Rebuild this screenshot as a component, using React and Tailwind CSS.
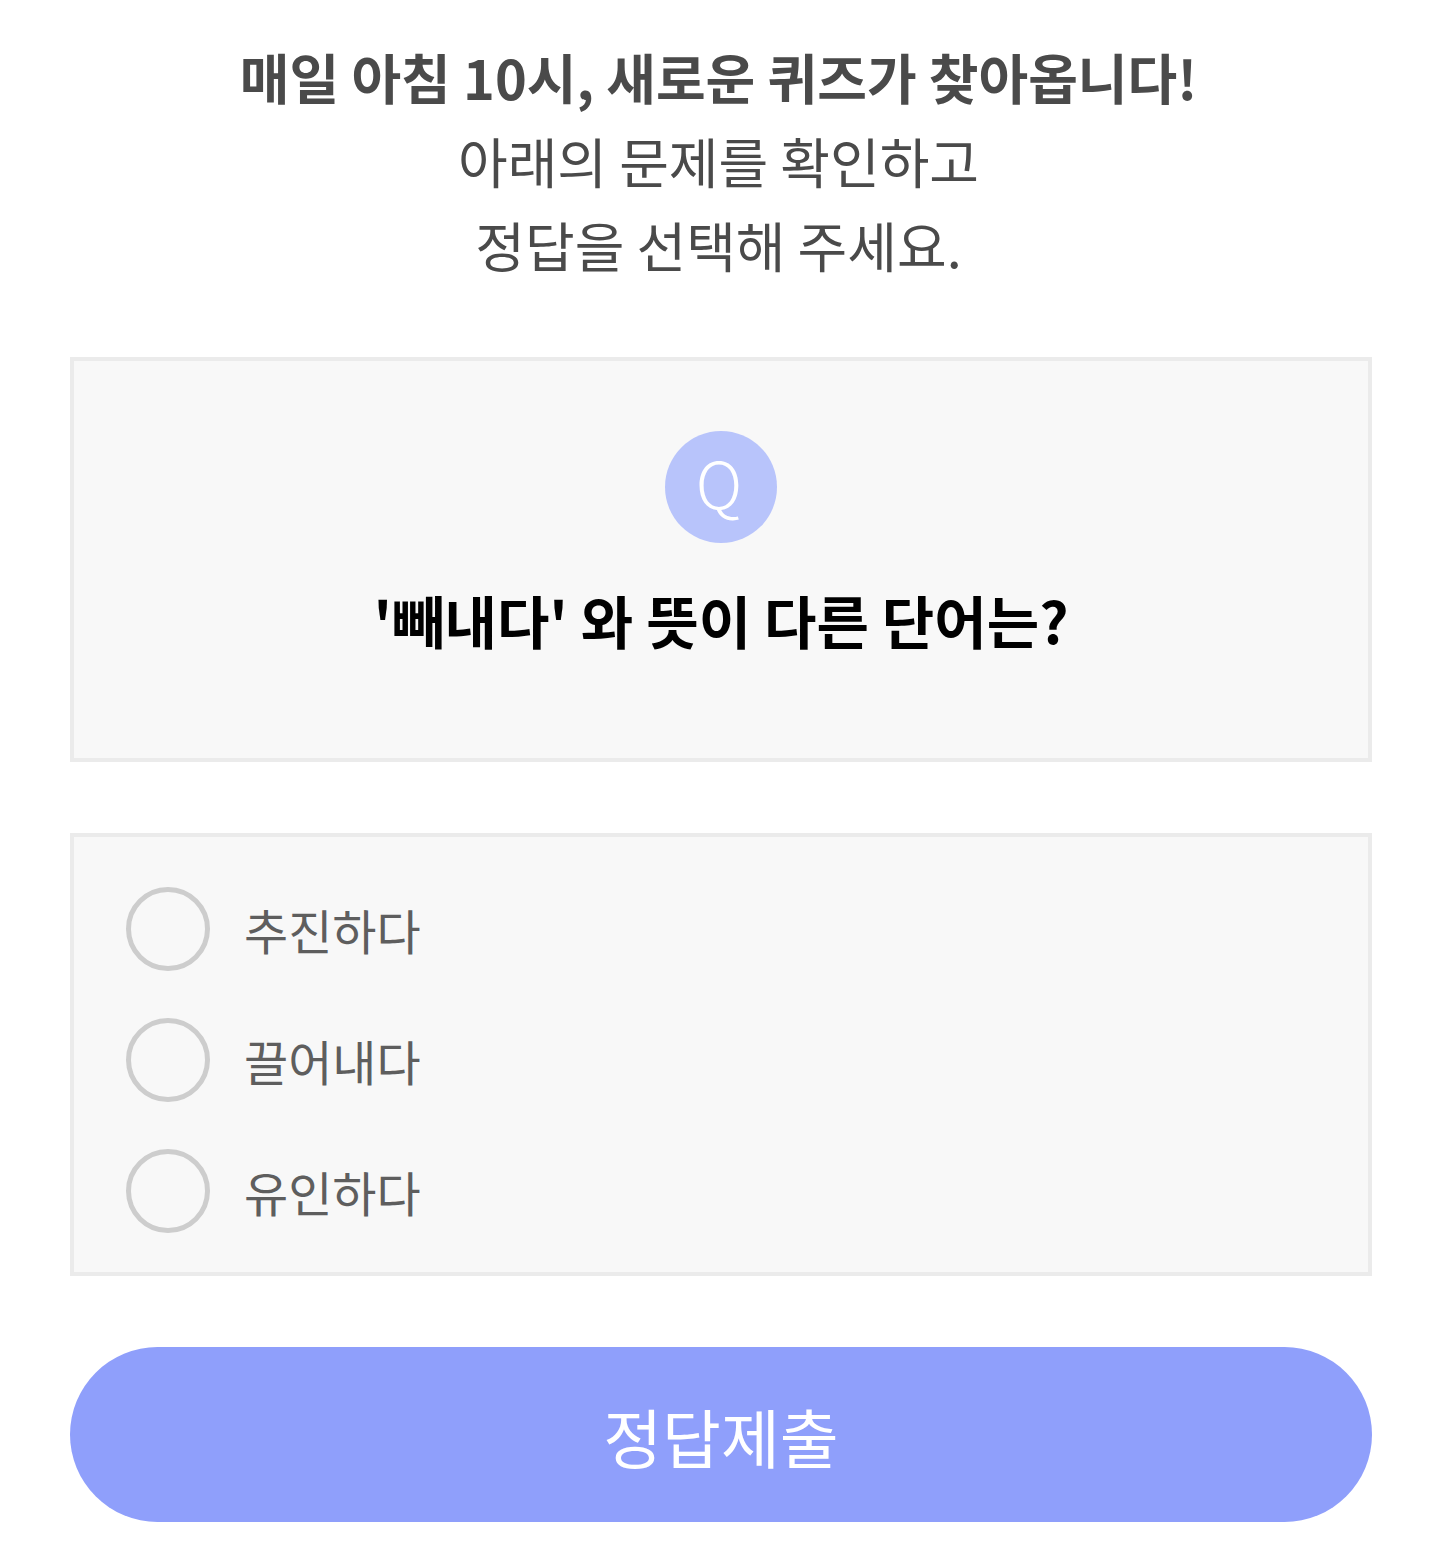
export default function App() {
  const font = { fontFamily: '"Noto Sans CJK KR", "Noto Sans", sans-serif' };
  const options = ["추진하다", "끌어내다", "유인하다"];
  return (
    <div className="w-[1437px] h-[1568px] bg-white" style={font}>
      <div className="pt-[35px] text-center text-[#4a4a4a] text-[54px] leading-[84px]">
        <p className="font-bold">매일 아침 10시, 새로운 퀴즈가 찾아옵니다!</p>
        <p>아래의 문제를 확인하고</p>
        <p>정답을 선택해 주세요.</p>
      </div>
      <div className="pl-[70px] pr-[65px] pt-[70px]">
        <div className="h-[405px] border-4 border-[#ebebeb] bg-[#f8f8f8] flex flex-col items-center pt-[70px]">
          <div className="w-[112px] h-[112px] rounded-full bg-[#b8c4fb] flex items-center justify-center pb-[12px] pr-[4px] text-white text-[64px] font-light leading-none">
            Q
          </div>
          <p className="mt-[44px] text-[57px] font-bold text-black leading-[64px]">
            '빼내다' 와 뜻이 다른 단어는?
          </p>
        </div>
        <div className="mt-[71px] h-[443px] border-4 border-[#ebebeb] bg-[#f8f8f8] pt-[50px] pl-[52px] flex flex-col gap-[47px]">
          {options.map((o) => (
            <div key={o} className="flex items-center">
              <div className="w-[84px] h-[84px] rounded-full border-[5px] border-[#cdcdcd]" />
              <span className="ml-[34px] text-[48px] text-[#5e5e5e] leading-none">{o}</span>
            </div>
          ))}
        </div>
        <button className="mt-[71px] w-full h-[175px] rounded-full bg-[#8f9ffb] text-white text-[64px] flex items-center justify-center">
          정답제출
        </button>
      </div>
    </div>
  );
}
